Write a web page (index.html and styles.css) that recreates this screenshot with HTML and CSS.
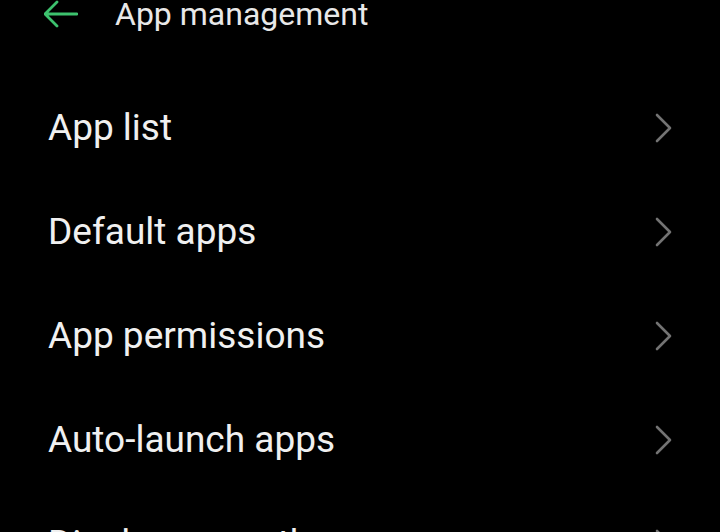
FILE: index.html
```html
<!DOCTYPE html>
<html lang="en">
<head>
  <meta charset="UTF-8">
  <meta name="viewport" content="width=device-width, initial-scale=1.0">
  <title>App management</title>
  <link rel="stylesheet" href="styles.css">
</head>
<body>
  <!-- Header -->
  <div class="header">
    <div class="back-btn">
      <svg width="34" height="28" viewBox="0 0 34 28">
        <path d="M13 2 L1 14 L13 26 M1 14 H33" fill="none" stroke="#3dc26e" stroke-width="2.8" stroke-linecap="round" stroke-linejoin="round"/>
      </svg>
    </div>
    <h1 class="title">App management</h1>
  </div>
  <!-- End Header -->

  <ul class="list">
    <li class="list-item">
      <span>App list</span>
      <svg class="chevron" width="18" height="30" viewBox="0 0 18 30"><path d="M2 2 L15 15 L2 28" /></svg>
    </li>
    <li class="list-item">
      <span>Default apps</span>
      <svg class="chevron" width="18" height="30" viewBox="0 0 18 30"><path d="M2 2 L15 15 L2 28" /></svg>
    </li>
    <li class="list-item">
      <span>App permissions</span>
      <svg class="chevron" width="18" height="30" viewBox="0 0 18 30"><path d="M2 2 L15 15 L2 28" /></svg>
    </li>
    <li class="list-item">
      <span>Auto-launch apps</span>
      <svg class="chevron" width="18" height="30" viewBox="0 0 18 30"><path d="M2 2 L15 15 L2 28" /></svg>
    </li>
    <li class="list-item">
      <span>Display over other apps</span>
      <svg class="chevron" width="18" height="30" viewBox="0 0 18 30"><path d="M2 2 L15 15 L2 28" /></svg>
    </li>
  </ul>
</body>
</html>
```

FILE: styles.css
```css
body {
  margin: 0;
  background-color: #000;
  color: #f0f0f0;
  font-family: Roboto, 'Noto Sans', sans-serif;
  overflow: hidden;
}

/* Header */
.header {
  display: flex;
  align-items: center;
  height: 28px;
  padding-left: 44px;
}
.back-btn {
  display: flex;
  width: 34px;
  height: 28px;
}
.title {
  margin: 0 0 0 37px;
  font-size: 32px;
  font-weight: 400;
  line-height: 28px;
  color: #e8e8e8;
}
/* End Header */

.list {
  list-style: none;
  margin: 48px 0 0 0;
  padding: 0;
}
.list-item {
  display: flex;
  align-items: center;
  justify-content: space-between;
  height: 104px;
  padding: 0 47px 0 48px;
  font-size: 37px;
  line-height: 104px;
}
.chevron path {
  fill: none;
  stroke: #737373;
  stroke-width: 2.6;
  stroke-linecap: round;
  stroke-linejoin: round;
}
```
